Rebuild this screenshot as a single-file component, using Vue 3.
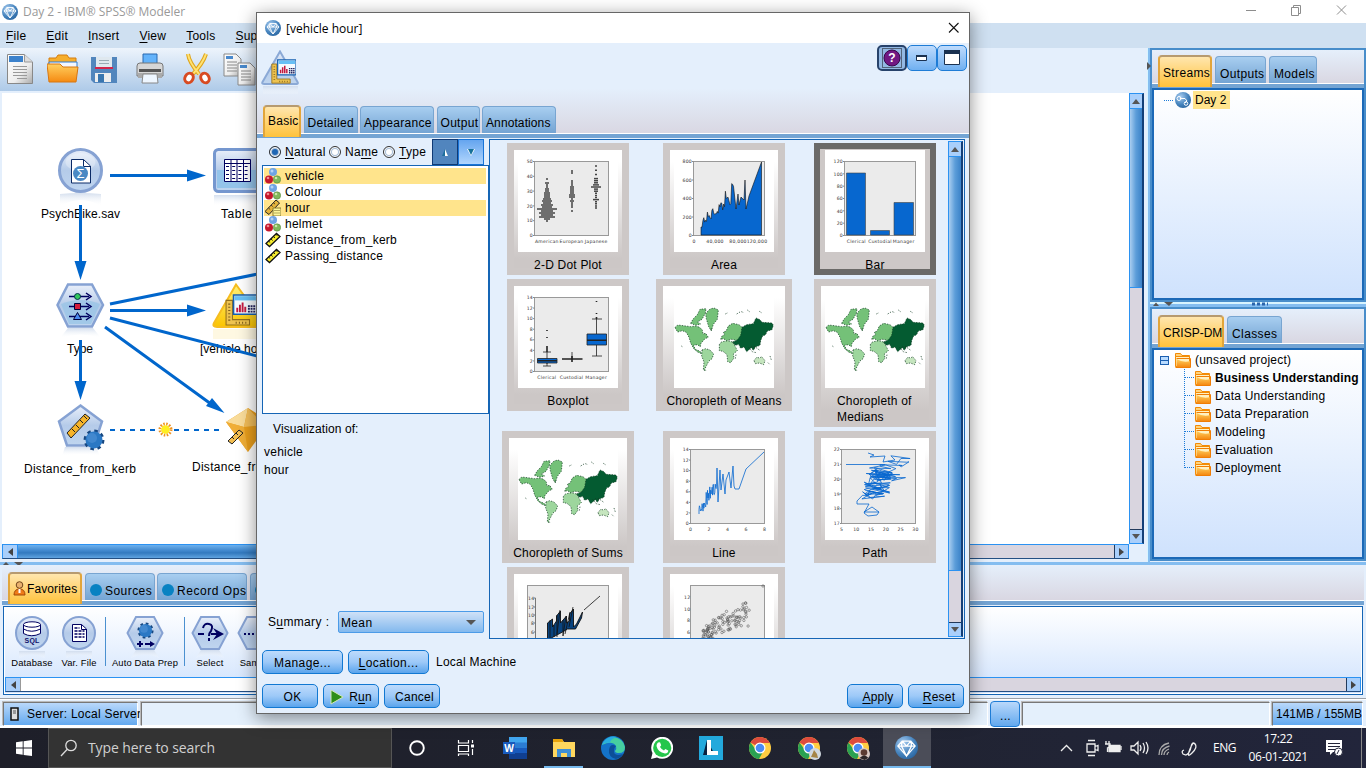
<script setup>
const menus = [['F', 'ile', 34], ['E', 'dit', 34], ['I', 'nsert', 43], ['V', 'iew', 38], ['T', 'ools', 43], ['S', 'up', 40]]
const fields = [
  { name: 'vehicle', kind: 'nominal', on: true },
  { name: 'Colour', kind: 'nominal' },
  { name: 'hour', kind: 'rulernum', on: true },
  { name: 'helmet', kind: 'nominal' },
  { name: 'Distance_from_kerb', kind: 'ruler' },
  { name: 'Passing_distance', kind: 'ruler' }
]
const phases = ['Business Understanding', 'Data Understanding', 'Data Preparation', 'Modeling', 'Evaluation', 'Deployment']

const rnd = (s => () => (s = (s * 16807) % 2147483647) / 2147483647)(42)

const ticks = (list, top = 11.5, bottom = 85.5) =>
  list.map((t, i) => ({ t, y: bottom - ((bottom - top) * i) / (list.length - 1) }))

/* dot plot: rows of stacked dots, widest in the middle of each group */
const dots = [
  [29, 29, [1, 0, 2, 1, 1, 2, 2, 3, 3, 3, 4, 5, 4, 6, 5, 10, 6, 8, 6, 8, 3, 1], 2],
  [54, 21, [1, 1, 0, 0, 0, 1, 1, 1, 2, 2, 2, 2, 3, 3, 1, 2, 1, 1, 1, 0, 1], 2],
  [78, 16, [1, 0, 1, 0, 1, 0, 2, 2, 2, 3, 5, 2, 2, 1, 1, 1, 3, 1, 1, 1, 1], 2.1]
].flatMap(([cx, y0, rows, step]) =>
  rows.map((w, i) => ({ cx, y: y0 + i * step, w })).filter(r => r.w)
)
const areaPts = (() => {
  let p = 'M27 85V77'
  for (let x = 28; x < 60; x += 0.9) p += `L${x.toFixed(1)} ${(78 - (x - 27) * 0.8 - rnd() * (x > 50 ? 20 : 11)).toFixed(1)}`
  return p + 'L62 59L64 44L65 55L67 47L70 50L71 30L72 59L75 46L87.5 12V85Z'
})()
const linePts = (() => {
  let p = 'M25 76'
  for (let x = 25; x < 43; x += 0.45) p += `L${x.toFixed(1)} ${(75 - (x - 25) * 1.5 - rnd() * 15 + 5).toFixed(1)}`
  return p + 'L43 30L44 64L46 32L47 52L49 36L51 56L52 42L55 34L57 50L59 28L60 48L61 51H65L72 31L90 14'
})()
const pathPts = (() => {
  let p = 'M43 15L49 17L45 19L60 18L58 24L70 22'
  for (let i = 0; i < 34; i++) p += `L${(60 + (rnd() - 0.5) * 42 + 5 - i / 6).toFixed(1)} ${(17 + i * 0.7 + rnd() * 8).toFixed(1)}`
  for (let i = 0; i < 90; i++) p += `L${(55 + (rnd() - 0.5) * 27 - i / 18).toFixed(1)} ${(28 + i * 0.3 + rnd() * 9).toFixed(1)}`
  return p + 'L32 63V66L44 66L39 75L43 78L52 77L54 74L47 69L39 74H54'
})()
const scatter = Array.from({ length: 120 }, (_, i) => {
  const q = rnd()
  return { x: 27 + q * q * 46 + rnd() * 7, y: 72 - q * 20 - rnd() * (12 + q * 13) }
}).concat([{ x: 89, y: 12 }, { x: 69, y: 30 }, { x: 62, y: 51 }, { x: 60, y: 42 }])

const cards = [
  { t: '2-D Dot Plot', k: 'dot', x: 16.5, ys: ['0', '10', '20', '30', '40', '50'], xs: ['American', 'European', 'Japanese'] },
  { t: 'Area', k: 'area', x: 19.5, ys: ['0', '200', '400', '600', '800'], xs: ['0', '40,000', '80,000', '120,000'], edge: true },
  { t: 'Bar', k: 'bar', x: 19.5, ys: ['0', '20', '40', '60', '80', '100', '120'], xs: ['Clerical', 'Custodial', 'Manager'], sel: true },
  { t: 'Boxplot', k: 'box', x: 16.5, ys: ['0', '2', '4', '6', '8', '10', '12', '14'], xs: ['Clerical', 'Custodial', 'Manager'] },
  { t: 'Choropleth of Means', k: 'map', wide: 136 },
  { t: 'Choropleth of Medians', k: 'map', tall: true },
  { t: 'Choropleth of Sums', k: 'map', wide: 132 },
  { t: 'Line', k: 'line', x: 16.5, ys: ['0', '2', '4', '6', '8', '10', '12', '14'], xs: ['0', '2', '4', '6', '8'], edge: true },
  { t: 'Path', k: 'path', x: 16.5, ys: ['17', '18', '19', '20', '21', '22'], xs: ['5', '10', '15', '20', '25', '30'], edge: true },
  { t: '', k: 'ribbon', x: 9.5 },
  { t: '', k: 'scatter', x: 16.5 }
]
const xpos = c => c.xs.map((t, i) => {
  const w = 90.5 - c.x
  return { t, x: c.k === 'area' ? [20, 41, 64, 83][i] : c.edge ? c.x + (w * i) / (c.xs.length - 1) : c.x + (w * (i + 0.5)) / c.xs.length }
})
</script>

<template>
  <div class="screen">
    <svg class="defs" width="0" height="0">
      <defs>
        <linearGradient id="nodeFill" x1="0" y1="0" x2="0" y2="1"><stop offset="0" stop-color="#e9effa" /><stop offset=".5" stop-color="#b5cbe9" /><stop offset="1" stop-color="#bfd5ef" /></linearGradient>
        <linearGradient id="refl" x1="0" y1="0" x2="0" y2="1"><stop offset="0" stop-color="#cfdbec" stop-opacity=".9" /><stop offset="1" stop-color="#fff" stop-opacity="0" /></linearGradient>
        <linearGradient id="gold" x1="0" y1="0" x2="0" y2="1"><stop offset="0" stop-color="#fff27a" /><stop offset="1" stop-color="#fbc400" /></linearGradient>
        <linearGradient id="orange" x1="0" y1="0" x2="0" y2="1"><stop offset="0" stop-color="#ffd060" /><stop offset="1" stop-color="#f58a12" /></linearGradient>
        <linearGradient id="paper" x1="0" y1="0" x2="1" y2="1"><stop offset="0" stop-color="#fff" /><stop offset=".6" stop-color="#eee" /><stop offset="1" stop-color="#aaa" /></linearGradient>
        <radialGradient id="ball" cx=".35" cy=".3" r=".8"><stop offset="0" stop-color="#a9cdf0" /><stop offset=".6" stop-color="#4583bd" /><stop offset="1" stop-color="#27629d" /></radialGradient>
      </defs>
      <symbol id="gem" viewBox="0 0 16 16"><circle cx="8" cy="8" r="8" fill="url(#ball)" /><path d="M5 3.5h6L14 7l-6 7-6-7zM2 7h12M5 3.500l-.5 3.500L8 14l3.500-7L11 3.500M5 3.500L8 7l3-3.500" fill="none" stroke="#fff" stroke-width=".9" /></symbol>
      <symbol id="folder" viewBox="0 0 16 16"><path d="M.5 14.500V1.500h5l1.500 2h7.500v2H.5" fill="#ffd37c" stroke="#f38b06" /><path d="M.5 4.500h14v10H.5z" fill="#fff1c0" stroke="#f38b06" /><path d="M1.500 7Q8 11 15.500 9v6H1.500z" fill="url(#orange)" /><path d="M.5 15.500h15v-9h-14" fill="none" stroke="#f07d05" /></symbol>
      <symbol id="nominal" viewBox="0 0 16 16"><circle cx="8" cy="4" r="4" fill="#6fa3e3" /><circle cx="7" cy="3" r="1.500" fill="#b5d3f7" /><circle cx="4" cy="11.500" r="4" fill="#c5172c" /><circle cx="3" cy="10" r="1.300" fill="#ee8b90" /><circle cx="12" cy="11.500" r="3.700" fill="#81b85b" stroke="#4b7c33" stroke-width=".5" /><circle cx="11" cy="10" r="1.300" fill="#cbe8a9" /></symbol>
      <symbol id="ruler" viewBox="0 0 16 16"><path d="M1 11.500L11.500 1.500l3.500 3L4.500 14.500z" fill="#f8ee2d" stroke="#111" stroke-width="1.300" /><path d="M3.500 9l1.700 1.500M6 7l1.700 1.500M8.500 4.500L10 6M11 2.500l1.500 1.200" stroke="#111" stroke-width=".9" /></symbol>
      <symbol id="rulernum" viewBox="0 0 16 16"><path d="M0 11.500L11 0l3.500 3L4 14.500z" fill="#e5b43c" stroke="#222" /><path d="M3.500 8l1.700 1.500M6 5l1.700 1.500M8.500 3L10 4" stroke="#222" stroke-width=".8" /><path d="M8 8h8v8H8z" fill="#fdf69a" stroke="#8a7a30" /><path d="M9.500 10.500h5M9.500 13h5" stroke="#6b5c20" stroke-dasharray="1 1" /></symbol>
      <symbol id="chrome" viewBox="0 0 24 24"><circle cx="12" cy="12" r="11" fill="#ffcd42" /><path d="M12 12L2.500 6.500A11 11 0 0 1 21.500 6.500L22 7H12z" fill="#de4b3d" /><path d="M2.500 6.500A11 11 0 0 0 11 23l5-9-4 2-4-2z" fill="#2aa152" /><circle cx="12" cy="12" r="5.500" fill="#fff" /><circle cx="12" cy="12" r="4.300" fill="#4b8bf5" /></symbol>
      <symbol id="chartpad" viewBox="0 0 30 30"><path d="M1 6h6v18h16v5H1z" fill="#eec350" stroke="#94701b" /><path d="M4 9v16M10 27h11" stroke="#80601a" stroke-width="2" stroke-dasharray="1 2" /><path d="M8 1h22v18H8z" fill="#f5fbff" stroke="#1760b0" stroke-width="1.500" /><path d="M9 2h20v4H9z" fill="#68c0f5" /><path d="M11.500 17v-4M14 17V10M16.500 17V8M19 17v-5" stroke="#c31940" stroke-width="1.800" /><path d="M21.500 11.500h7M21.500 14h7M21.500 16.500h7" stroke="#252560" stroke-width="1.700" stroke-dasharray="1.800 .7" /></symbol>
      <symbol id="gear" viewBox="0 0 22 22"><circle cx="11" cy="11" r="8.700" fill="none" stroke="#174780" stroke-width="3.500" stroke-dasharray="3.400 3.430" /><circle cx="11" cy="11" r="8.500" fill="#2b78c4" /><circle cx="9" cy="9" r="5" fill="#4288cf" /></symbol>
    </svg>

    <header class="titlebar">
      <svg class="app-ic"><use href="#gem" /></svg><span>Day 2 - IBM® SPSS® Modeler</span>
      <svg class="win" width="110" height="23" viewBox="0 0 110 23" fill="none" stroke="#8d8d8d"><path d="M1 10.500h10M46.500 7.500h7v8h-7zM48.500 7.500v-2h7v8h-2M92 5.500l9 9M101 5.500l-9 9" /></svg>
    </header>
    <nav class="menubar"><span v-for="m in menus" :key="m[1]"><u>{{ m[0] }}</u>{{ m[1] }}</span></nav>

    <div class="mid">
      <main class="work">
        <div class="toolbar">
          <svg width="26" height="32" viewBox="0 0 26 32"><path d="M.5 1.500h17L25.500 9v21.500H.5z" fill="url(#paper)" stroke="#888" /><path d="M2 3h14v6H2z" fill="#3c82cc" /><path d="M17.500 1.500V9h8" fill="#ddd" stroke="#999" /><path d="M6 13.500h14M6 16.500h14M6 19.500h14M6 22.500h14M10 25.500h10" stroke="#999" /></svg>
          <svg width="32" height="30" viewBox="0 0 32 30"><path d="M2 4h7l2-3h9l2 3h7v8H2z" fill="#f6ae2c" stroke="#d57d0e" /><path d="M2 8h28v10H2z" fill="#f3f7ff" stroke="#2f7fd4" /><path d="M0 10h13l3 3h15l-2 15H2z" fill="url(#orange)" stroke="#d77611" /></svg>
          <svg width="26" height="28" viewBox="0 0 26 28"><path d="M0 1h26v26H3l-3-3z" fill="#5286bd" /><path d="M5 1h16v12H5z" fill="#dfe8ef" /><path d="M4 11h18v2H4z" fill="#d2254c" /><path d="M8 4.500h10M8 7.500h10" stroke="#99aab5" /><path d="M4 17h16v9H4z" fill="#eee" /><path d="M7 18h6v8H7z" fill="#3976af" /></svg>
          <svg width="28" height="32" viewBox="0 0 28 32"><path d="M7 1h14v12H7z" fill="#63b3fb" stroke="#2868b0" /><path d="M1 13q0-3 3-3h20q3 0 3 3v10H1z" fill="#d6d6d6" stroke="#777" /><path d="M3 16h22v3H3z" fill="#555" /><path d="M2 20h24v5H2z" fill="#aaa" /><path d="M7 21h14l1 9H6z" fill="#eef6ff" stroke="#888" /></svg>
          <svg width="28" height="32" viewBox="0 0 28 32"><path d="M5 1q1 8 11 20M23 1Q20 10 10 21" fill="none" stroke="#dfa51b" stroke-width="4" /><path d="M5 1q1 8 11 20M23 1Q20 10 10 21" fill="none" stroke="#ffe273" stroke-width="2" /><ellipse cx="6" cy="25" rx="4" ry="5" transform="rotate(28 6 25)" fill="#fff" stroke="#d84b22" stroke-width="3" /><ellipse cx="22" cy="25" rx="4" ry="5" transform="rotate(-28 22 25)" fill="#fff" stroke="#d84b22" stroke-width="3" /></svg>
          <svg width="34" height="34" viewBox="0 0 34 34"><g id="pg"><path d="M1 1h12l5 5v17H1z" fill="url(#paper)" stroke="#888" /><path d="M3 3h7v3H3z" fill="#4989cd" /><path d="M4 9h10M4 12h10M4 15h10M4 18h10" stroke="#888" /></g><use href="#pg" x="14" y="9" /></svg>
        </div>
        <div class="canvas-row">
          <svg class="canvas" width="1127" height="451" viewBox="2 93 1127 451" font-family="Liberation Sans, Arial, sans-serif" font-size="12">
            <path d="M60 194q20-2 41 0v12q-20-12-41 0z" fill="url(#refl)" />
            <circle cx="80.500" cy="170.500" r="21" fill="url(#nodeFill)" stroke="#86a2d3" stroke-width="3" />
            <ellipse cx="80.500" cy="162" rx="15" ry="9" fill="#fff" opacity=".3" />
            <path d="M71.500 159.500h12l7 6.500v17h-19z" fill="#fff" stroke="#0b2b66" /><path d="M83.500 159.500v7h7" fill="none" stroke="#0b2b66" />
            <circle cx="80.500" cy="173.500" r="7.500" fill="#4a89c4" /><text x="80.500" y="178" text-anchor="middle" fill="#fff" font-size="13">Σ</text>
            <text x="41" y="218" textLength="79">PsychBike.sav</text>
            <path d="M214 195h50v11h-50z" fill="url(#refl)" />
            <rect x="214.500" y="149.500" width="50" height="42" rx="4" fill="url(#nodeFill)" stroke="#7597cf" stroke-width="3" /><path d="M217 170h40v18h-40z" fill="#94c4ea" />
            <path d="M224.500 159.500h26v22h-26zM225 163.500h25M231 160v21M237 160v21M243.500 160v21" fill="#fff" stroke="#00005e" /><path d="M226 166.500h25M226 170.500h25M226 174.500h25M226 178.500h25" stroke="#00005e" stroke-dasharray="3 3.200" />
            <text x="221" y="218" textLength="31">Table</text>
            <path d="M68 328h25l8 10q-20-7-41 0z" fill="url(#refl)" />
            <path d="M68 284.500h24l11 20.500-11 21.500H68L57.500 305z" fill="url(#nodeFill)" stroke="#86a2d3" stroke-width="2.500" /><path d="M61 304q20-8 39 0l-9 20H69z" fill="#96c3e5" opacity=".7" />
            <path d="M69 296.500h20M69 306.500h20M69 316.500h20" stroke="#000060" stroke-width="1.500" /><path d="M86 293l5 3.500-5 3.500M86 303l5 3.500-5 3.500M86 313l5 3.500-5 3.500" fill="none" stroke="#000060" stroke-width="1.500" />
            <circle cx="77.500" cy="296.500" r="3" fill="#32c85c" stroke="#00304a" /><path d="M74.500 303.500h6v6h-6z" fill="#d41c3b" stroke="#00003a" /><path d="M77.500 312.500l4 7h-8z" fill="#4a8af0" stroke="#00003a" />
            <text x="67" y="353" textLength="26">Type</text>
            <path d="M213 329h47v10h-47z" fill="#fdf3cf" opacity=".6" />
            <path d="M236 284.500L214 323q-2 4 3 4h50z" fill="url(#gold)" stroke="#f6bd20" stroke-width="2" />
            <use href="#chartpad" x="225" y="294" width="32" height="32" />
            <text x="200" y="353">[vehicle hour]</text>
            <path d="M65 447h31l4 9q-20-4-38 0z" fill="url(#refl)" />
            <path d="M80.500 405.500l21.500 16-8 24H67l-8-24z" fill="url(#nodeFill)" stroke="#86a2d3" stroke-width="2.500" />
            <path d="M67 433l18-19 5 4-19 20z" fill="#f7b429" stroke="#222" /><path d="M72 429l3 3M76 425l3 3M80 420l3 3M84 416l3 3" stroke="#222" />
            <use href="#gear" x="83" y="429" width="22" height="22" />
            <text x="24" y="473" textLength="112">Distance_from_kerb</text>
            <path d="M248 408l22 14-22 30-22-30z" fill="#e99e1c" /><path d="M248 408l-22 14 18 5z" fill="#f9dc9a" /><path d="M248 408l-4 19 20-2z" fill="#f2bd59" /><path d="M244 427l4 25-22-30z" fill="#f0ae37" />
            <path d="M228 441l11-11 4 3-11 11z" fill="#f3be50" stroke="#222" /><path d="M232 437l2 2M236 433l2 2" stroke="#222" />
            <text x="192" y="471" textLength="112">Distance_from_kerb</text>
            <g stroke="#0066cc" stroke-width="3" fill="none">
              <path d="M110 175.500h80M80.500 205v60M110 304l170-34.500M110 310.500h80M110 318l170 44M105 327l106 77M80.500 340v45" />
              <path d="M110 430h45M174 430h46" stroke-width="2" stroke-dasharray="5 5" />
            </g>
            <path d="M187 169.500l19 6-19 6zM187 304.500l19 6-19 6zM74.500 261l6 19 6-19zM74.500 381l6 19 6-19zM212 398l12.500 15-18.500-7z" fill="#0066cc" />
            <circle cx="165.500" cy="429.500" r="5.500" fill="none" stroke="#ef9420" stroke-width="3" stroke-dasharray="1.500 1.380" /><circle cx="165.500" cy="429.500" r="4.300" fill="#ffef22" />
          </svg>
          <div class="vs canvas-vs"><i class="btn up"></i><i class="thumb"></i><i class="btn down"></i></div>
        </div>
        <div class="hs"><i class="btn left"></i><i class="thumb"></i><i class="btn right"></i></div>
      </main>
      <div class="split"></div>
      <aside class="side">
        <section class="panel top">
          <div class="tabs"><b class="tab on">Streams</b><b class="tab">Outputs</b><b class="tab">Models</b></div>
          <div class="pane"><div class="tree-row"><i class="dash"></i>
            <svg class="i16" viewBox="0 0 16 16"><circle cx="8" cy="8" r="8" fill="url(#ball)" /><path d="M5 6.500h5l2 2.500-2 2" fill="none" stroke="#fff" /><circle cx="4" cy="6.500" r="2" fill="none" stroke="#fff" /><circle cx="11" cy="11.500" r="1.800" fill="none" stroke="#fff" /></svg>
            <span class="hl">Day 2</span></div></div>
        </section>
        <div class="hsplit"><svg width="120" height="4" viewBox="0 0 120 4"><path d="M3 4l3-3.500L9 4M14 0h9l-4 4z" fill="#555" /><path d="M102 2h16" stroke="#2b65ac" stroke-width="3" stroke-dasharray="3 2" /></svg></div>
        <section class="panel bottom">
          <div class="tabs"><b class="tab on crisp">CRISP-DM</b><b class="tab">Classes</b></div>
          <div class="pane">
            <div class="tree-row"><i class="minus"></i><svg class="i16"><use href="#folder" /></svg><span>(unsaved project)</span></div>
            <div class="kids"><div v-for="(p, i) in phases" :key="p" class="tree-row kid" :class="{ bold: i === 0 }"><i class="dot"></i><svg class="i16"><use href="#folder" /></svg><span>{{ p }}</span></div></div>
          </div>
        </section>
      </aside>
    </div>

    <section class="palette">
      <div class="seam"><svg width="30" height="4" viewBox="0 0 30 4"><path d="M2 4l4-4 4 4M14 0h9l-4 4z" fill="#555" /></svg></div>
      <div class="tabs">
        <b class="tab on fav"><svg width="13" height="15" viewBox="0 0 13 15"><circle cx="6.500" cy="4" r="3.300" fill="#e9b16e" stroke="#70451c" /><path d="M1 14q0-6 5.500-6T12 14z" fill="#ef7b18" stroke="#a44a08" /><path d="M6.500 8v4" stroke="#fff" stroke-width="2" /></svg>Favorites</b>
        <b class="tab"><i class="disc"></i>Sources</b><b class="tab rec"><i class="disc"></i>Record Ops</b><b class="tab"><i class="disc"></i>Field Ops</b>
      </div>
      <div class="shelf">
        <div class="items">
          <div class="item w1"><svg width="38" height="44" viewBox="0 0 38 44"><path d="M6 36h26v8q-13-9-26 0z" fill="url(#refl)" /><circle cx="19" cy="18" r="16" fill="url(#nodeFill)" stroke="#86a2d3" stroke-width="2" /><path d="M10.500 9.500v9q8 4.500 17 0v-9" fill="#fff" stroke="#000060" /><ellipse cx="19" cy="9.500" rx="8.500" ry="2.700" fill="#fff" stroke="#000060" /><path d="M10.500 14q8 4.500 17 0" fill="none" stroke="#000060" /><text x="19" y="28" text-anchor="middle" font-size="7" font-weight="700" fill="#10106a" font-family="Liberation Sans">SQL</text></svg><span>Database</span></div>
          <div class="item w2"><svg width="38" height="44" viewBox="0 0 38 44"><path d="M6 36h26v8q-13-9-26 0z" fill="url(#refl)" /><circle cx="19" cy="18" r="16" fill="url(#nodeFill)" stroke="#86a2d3" stroke-width="2" /><path d="M12.500 9.500h9l5 4.500v12.500h-14z" fill="#fff" stroke="#000060" /><path d="M21.500 9.500v5h5" fill="none" stroke="#000060" /><path d="M14.500 13h5M14.500 16h10M14.500 19h10M14.500 22h10" stroke="#000060" stroke-width="1.500" stroke-dasharray="3 1" /></svg><span>Var. File</span></div>
          <hr /><div class="item w3"><svg width="38" height="44" viewBox="0 0 38 44"><path d="M10 35h18l6 9q-15-9-30 0z" fill="url(#refl)" /><path d="M10 2h18l8.500 16L28 34H10L1.500 18z" fill="url(#nodeFill)" stroke="#86a2d3" stroke-width="2" /><use href="#gear" x="11" y="7" width="17" height="17" /><path d="M11 29h6M14 26v6M19 29h7" stroke="#000060" stroke-width="2" /><path d="M24 26l5 3-5 3z" fill="#000060" /></svg><span>Auto Data Prep</span></div>
          <hr /><div class="item w4"><svg width="38" height="44" viewBox="0 0 38 44"><path d="M10 35h18l6 9q-15-9-30 0z" fill="url(#refl)" /><path d="M10 2h18l8.500 16L28 34H10L1.500 18z" fill="url(#nodeFill)" stroke="#86a2d3" stroke-width="2" /><path d="M7 19h6M20 19h8" stroke="#000060" stroke-width="2" /><path d="M12 13q1-5 6-4t2 7q-2 2-2 5M18 23v3" fill="none" stroke="#000060" stroke-width="2" /><path d="M22 13l11 6-11 6 4-6z" fill="#000060" /></svg><span>Select</span></div>
          <div class="item w5"><svg width="38" height="44" viewBox="0 0 38 44"><path d="M10 2h18l8.500 16L28 34H10L1.500 18z" fill="url(#nodeFill)" stroke="#86a2d3" stroke-width="2" /><path d="M7 19h22" stroke="#000060" stroke-width="2" stroke-dasharray="2 2" /></svg><span>Sample</span></div>
        </div>
        <div class="hs shelf-hs"><i class="btn left"></i><i class="gap"></i><i class="btn right"></i></div>
      </div>
    </section>

    <footer class="status">
      <div class="cell server"><svg width="9" height="14" viewBox="0 0 9 14"><path d="M1 1h7v12H1z" fill="#ddd" stroke="#111" stroke-width="1.500" /><path d="M3 4h3M3 6h3" stroke="#555" /></svg>Server: Local Server</div>
      <div class="cell long"></div><div class="more">...</div><div class="cell mid2"></div><div class="cell mem">141MB / 155MB</div>
    </footer>

    <div class="taskbar">
      <div class="start"><svg width="16" height="16" viewBox="0 0 16 16" fill="#fff"><path d="M0 2.300L6.700 1.300V7.600H0zM7.600 1.200L16 0V7.600H7.600zM0 8.500H6.700V14.700L0 13.800zM7.600 8.500H16V16L7.600 14.900z" /></svg></div>
      <div class="search"><svg width="18" height="18" viewBox="0 0 18 18" fill="none" stroke="#ddd" stroke-width="1.300"><circle cx="11" cy="6.500" r="5.200" /><path d="M7 10.500L1 17" /></svg><span>Type here to search</span></div>
      <div class="apps">
        <div class="app"><svg width="18" height="18" viewBox="0 0 18 18"><circle cx="9" cy="9" r="6.800" fill="none" stroke="#fff" stroke-width="1.900" /></svg></div>
        <div class="app"><svg width="18" height="18" viewBox="0 0 18 18" fill="none" stroke="#fff" stroke-width="1.200"><path d="M1.500 1v3h10V1M1.500 6.500h10v6h-10zM1.500 17v-2h10v2M15.500 1v3M15.500 10v6" /><path d="M14 5.500h3v3h-3z" fill="#fff" stroke="none" /></svg></div>
        <div class="app"><svg width="24" height="22" viewBox="0 0 24 22"><path d="M6 0h18v6H6z" fill="#41a5ee" /><path d="M6 5.500h18V11H6z" fill="#2b7cd3" /><path d="M6 11h18v5.500H6z" fill="#185abd" /><path d="M6 16h18v6H6z" fill="#103f91" /><path d="M0 5h12v12H0z" fill="#185abd" /><text x="6" y="14.500" text-anchor="middle" font-size="10" font-weight="700" fill="#fff" font-family="Open Sans, sans-serif">W</text></svg></div>
        <div class="app running"><svg width="22" height="20" viewBox="0 0 22 20"><path d="M0 1h9l2 3h11v15H0z" fill="#ffd75e" /><path d="M0 1h9l1.500 3H0z" fill="#e8a40c" /><path d="M4 19v-8h14v8h-4v-4H8v4z" fill="#3f8fd4" /></svg></div>
        <div class="app"><svg width="24" height="24" viewBox="0 0 24 24"><circle cx="12" cy="12" r="12" fill="#1473c9" /><path d="M1 9a12 12 0 0 1 23 2q0 6-6 6-4 0-4-2 2-2 1-5-4-6-14-1z" fill="#46cfa0" /><path d="M1 9a12 12 0 0 1 15-8Q9 3 9 7 4 6 1 9z" fill="#29aee0" /><path d="M15 10q-6-3-7 4-1 7 7 9 5-1 7-5-10 3-9-4 0-2 2-4z" fill="#0c4f98" /></svg></div>
        <div class="app"><svg width="22" height="22" viewBox="0 0 22 22"><path d="M0 22l1.500-6A11 11 0 1 1 6 20.500z" fill="#fff" /><circle cx="11.200" cy="10.900" r="9.100" fill="#25c64b" /><path d="M7 5.500l2-.2 1.200 3L9 10q1.500 2.500 4 3.500l1.300-1.600 3 1.500q-.2 3-3.300 3Q7 15.500 5.500 9 5.500 6.500 7 5.500z" fill="#fff" /></svg></div>
        <div class="app"><svg width="24" height="24" viewBox="0 0 24 24"><path d="M0 0h24v24H0z" fill="#23a9dc" /><path d="M8 4L4 19h12z" fill="#08213f" /><path d="M8 4h4v11h7v4H8z" fill="#fff" /></svg></div>
        <div class="app"><svg width="24" height="24"><use href="#chrome" /></svg></div>
        <div class="app"><svg width="24" height="24" viewBox="0 0 24 24"><use href="#chrome" /><circle cx="18" cy="18" r="6" fill="#d0d8e0" /><path d="M14 21q2-4 3-7l3 4 1 4z" fill="#a48446" /></svg></div>
        <div class="app"><svg width="24" height="24" viewBox="0 0 24 24"><use href="#chrome" /><circle cx="18" cy="18" r="6" fill="#d9c9c4" /><circle cx="18" cy="16.500" r="3.300" fill="#5b3b32" /><path d="M13.500 22q5-5 9 0l-4 2z" fill="#2b2527" /></svg></div>
        <div class="app active"><svg width="23" height="23"><use href="#gem" /></svg></div>
      </div>
      <svg class="tray" width="144" height="24" viewBox="0 0 144 24" fill="none" stroke="#eee" stroke-width="1.300"><path d="M1 15l5.500-5.500L12 15" /><path d="M27 8h8v8h-8zM35 10.500l3-1v5l-3-1M28 4.500h7M28 19.500h7" /><path d="M49 9.500h11v6H49z" fill="#eee" /><path d="M61 10v4M46 5v3M49 5v3M45 8h5v2q-1 2-2.500 2v4" /><path d="M71 10h3l4-4v12l-4-4h-3zM80 9q2 3 0 6M83 7q3 5 0 10M86 6q4 6 0 12" /><path d="M99 19q0-10 10-12M101.500 19q0-7 8-9M104 19q0-4 5-6M107 19q0-2 2-3" stroke="#aaa" /><path d="M124 14q-3 1-1 4l3 1q4-2 5-8t4-3-3 9-2-4 6-3" /></svg>
      <span class="eng">ENG</span>
      <div class="clock"><span>17:22</span><span>06-01-2021</span></div>
      <svg class="note" width="18" height="18" viewBox="0 0 18 18"><path d="M1 1h16v12H8l-3 3v-3H1z" fill="#fff" /><path d="M3 4.500h12M3 7.500h12M3 10.500h7" stroke="#23253a" /><circle cx="13.500" cy="13" r="4" fill="#fff" stroke="#23253a" /><path d="M12 15l2-4" stroke="#23253a" /></svg>
      <i class="peek"></i>
    </div>

    <div class="dialog">
      <div class="dtitle"><svg class="app-ic"><use href="#gem" /></svg><span>[vehicle hour]</span><svg class="x" width="12" height="12" viewBox="0 0 12 12"><path d="M1 1l9.500 9.500M10.500 1L1 10.500" stroke="#111" stroke-width="1.100" /></svg></div>
      <div class="dhead">
        <div class="dtop">
          <svg width="38" height="44" viewBox="0 0 38 44"><path d="M2 36h35v9H2z" fill="url(#refl)" /><path d="M19 1.500L1.500 32q-1 2 2 2h32q2 0 1-2z" fill="url(#nodeFill)" stroke="#8ba9d6" stroke-width="2" /><use href="#chartpad" x="10" y="9" width="25" height="25" /></svg>
          <div class="tools">
            <b class="tbtn dark"><svg width="20" height="20" viewBox="0 0 20 20"><rect x=".5" y=".5" width="19" height="19" fill="none" stroke="#111" stroke-dasharray="1 1" /><circle cx="10" cy="10" r="8" fill="#711782" stroke="#37064a" /><text x="10" y="14" text-anchor="middle" fill="#fff" font-size="12" font-weight="700" font-family="Liberation Sans">?</text></svg></b>
            <b class="tbtn"><svg width="12" height="8" viewBox="0 0 12 8"><path d="M.5 1.500h10v5H.5z" fill="#fff" stroke="#1a3150" /><path d="M0 2h11" stroke="#1a3150" stroke-width="2" /></svg></b>
            <b class="tbtn"><svg width="18" height="18" viewBox="0 0 18 18"><path d="M1.500 1.500h15v14h-15z" fill="#fff" stroke="#1a3150" /><path d="M1 3h16" stroke="#1a3150" stroke-width="4" /></svg></b>
          </div>
        </div>
        <div class="tabs"><b class="tab on">Basic</b><b class="tab">Detailed</b><b class="tab">Appearance</b><b class="tab">Output</b><b class="tab">Annotations</b></div>
      </div>
      <div class="dbody">
        <div class="dleft">
          <div class="sort">
            <label><i class="radio sel"></i><span><u>N</u>atural</span></label><label><i class="radio"></i><span>Na<u>m</u>e</span></label><label><i class="radio"></i><span><u>T</u>ype</span></label>
            <b class="sb pressed"><svg width="10" height="9" viewBox="0 0 10 9"><path d="M5 1l3 7H2z" fill="#1e6f9d" /><path d="M5 1l3 7H5" fill="#fff" /></svg></b><b class="sb"><svg width="10" height="9" viewBox="0 0 10 9"><path d="M1 1h8L5 8z" fill="#fff" /><path d="M2 1h6L5 7z" fill="#167199" /></svg></b>
          </div>
          <div class="list"><div v-for="f in fields" :key="f.name" class="frow" :class="{ on: f.on }"><svg class="i16"><use :href="'#' + f.kind" /></svg><span>{{ f.name }}</span></div></div>
          <p class="vis">Visualization of:</p><p class="v1">vehicle</p><p class="v1">hour</p>
          <div class="summary"><span>S<u>u</u>mmary<em>:</em></span><div class="select">Mean<i></i></div></div>
        </div>
        <div class="gallery">
          <div class="cards">
            <div v-for="c in cards" :key="c.k + c.t" class="card" :class="{ sel: c.sel, tall: c.tall, w136: c.wide === 136, w132: c.wide === 132 }">
              <svg class="chart" width="100" height="102" viewBox="0 0 100 102" font-family="DejaVu Sans, sans-serif" font-size="4.600" fill="#333">
                <rect width="100" height="102" fill="#fff" />
                <template v-if="c.k !== 'map'">
                  <rect :x="c.x" y="11.500" :width="90.5 - c.x" :height="c.x === 9.5 ? 80 : 74" fill="#ebebeb" stroke="#999" />
                  <g v-if="c.ys"><text v-for="t in ticks(c.ys)" :key="t.t" :x="c.x - 1.5" :y="t.y + 1.7" text-anchor="end">{{ t.t }}</text></g>
                  <path v-if="c.ys" :d="ticks(c.ys).map(t => `M${c.x - 1.5} ${t.y}h1.500`).join('')" stroke="#888" />
                  <g v-if="c.xs"><text v-for="t in xpos(c)" :key="t.t" :x="t.x" y="92.500" text-anchor="middle">{{ t.t }}</text></g>
                </template>
                <g v-if="c.k === 'dot'"><path v-for="(d, i) in dots" :key="i" :d="`M${d.cx - d.w} ${d.y}h${d.w * 2}`" stroke="#444" stroke-width="1.500" /></g>
                <path v-if="c.k === 'area'" :d="areaPts" fill="#0767cf" stroke="#111" stroke-width=".6" />
                <g v-if="c.k === 'bar'" fill="#0767cf" stroke="#444" stroke-width=".6"><path d="M21.500 85V23h19v62zM45.500 85v-4.500h19V85zM69 85V52.500h19.500V85z" /></g>
                <g v-if="c.k === 'box'" stroke="#222" stroke-width=".8"><path d="M29 66V78M25 66h8M25 80h8M29 75v5M54 66v7M78.500 33v15M74 33h10M78.500 59v11M74 70h10" /><path d="M19.500 72.500h19.500v4.500h-19.500zM69 48h19.500v11H69z" fill="#0767cf" /><path d="M19.500 74.800h19.500M44 73h20.500M69 54.200h19.500" stroke-width="1.500" /><path d="M29 60v6M29 51v1M29 44v1M54 70v6M78.500 31v2M78.500 27v1M78.500 15v1" stroke-width="1.600" /></g>
                <path v-if="c.k === 'line'" :d="linePts" fill="none" stroke="#0767cf" stroke-width=".8" />
                <path v-if="c.k === 'path'" :d="'M21 26.500H60' + pathPts" fill="none" stroke="#0767cf" stroke-width=".8" />
                <g v-if="c.k === 'ribbon'"><text x="10" y="26">14</text><text x="10" y="35">12</text><text x="10" y="43">10</text><text x="13" y="51">8</text><text x="13" y="60">6</text><path d="M17.500 24v50M16 24h1.500M16 33h1.500M16 41h1.500M16 49h1.500M16 58h1.500" stroke="#777" /><path d="M29.500 66V49l5-4v8l4-6v-5l4-5v12l6-7v7l3-2v-7l4-5v18l3-3 6-12-1 6-6 11h-8l-5 3z" fill="#08437f" stroke="#111" stroke-width=".9" /><path d="M32 46v18M36 51v12M39 41v22M42 36l-3 24M45 46v16M48 42l-3 20M52 38l-5 22M55 33l-4 20M66 36L82 22" stroke="#111" stroke-width=".8" fill="none" /></g>
                <g v-if="c.k === 'scatter'"><text x="10" y="25">12</text><text x="10" y="37">10</text><text x="13" y="48">8</text><text x="13" y="60">6</text><circle v-for="(p, i) in scatter" :key="i" :cx="p.x" :cy="p.y" r="1.200" fill="none" stroke="#555" stroke-width=".55" /></g>
                <g v-if="c.k === 'map'" transform="scale(.3333)" stroke="#123c22" stroke-width="2.200" stroke-dasharray="4 4">
                  <path d="M3 125l8-8 24 3 15 2 15-2 12 4 8 8 2 12 8-2 8 12-10 4-12 14-2 10-9-6-12 2 6 12 14 6 8 8-14-5-12-10-10-18-5-17-8-15-12-5-14 4zM50 112l8-14 12-12 8-16 18-2-2 14-10 18-14 8 10 6-14 4zM100 77l8-8 12-3 13 6-3 28-12 15-6 20-8-13-7-24-2-14z" fill="#74c178" />
                  <path d="M84 192l11-4 13 4 11 12-5 14-10 8-6 12-6 12 4 4-8-2 2-24-7-18zM136 176l6-8 18-4 16 4 8 14 6 12-12 10 2 12-10 14-9-3-2-21-12-10-11-2z" fill="#9dd69d" />
                  <path d="M140 160l4-10 8-4-4-8 8-2 7-16 13-8 19 4 16 14-6 22-12 12-20-4-16 4-8-6z" fill="#74c178" />
                  <path d="M176 168l14-6 10-14 4-24 14-8 20-3 8-17 12 5 6 8 30 2 4 7-4 13-14 4-6 12-8 2-6 15-2 14-14 5-6 10-6-8-14 12-8-14-10 4-6-12-10 3z" fill="#045b31" />
                  <path d="M240 224l8-10 9 2 6-4 10 12-4 12-13-5-12 2z" fill="#c5e5be" />
                  <path d="M224 184l12 14 12 2M232 181l12 10M240 180l16 12M154 84l8-4M188 84l10-6M220 72l8 6M256 76l8 5M288 210l4 12M282 230l6 6M186 206l-2 12M202 77l8 3M22 180l3 2M110 130l6-1M240 182l3 5" fill="none" />
                </g>
              </svg>
              <span class="cap">{{ c.t }}</span>
            </div>
          </div>
          <div class="vs gal-vs"><i class="btn up"></i><i class="thumb"></i><i class="btn down"></i></div>
        </div>
      </div>
      <div class="drow"><b class="bt w81">Mana<u>g</u>e...</b><b class="bt w81"><u>L</u>ocation...</b><span>Local Machine</span></div>
      <div class="drow last"><b class="bt ok">OK</b><b class="bt run"><svg width="14" height="16" viewBox="0 0 14 16"><path d="M1 1l12 7-12 7z" fill="#2f8f18" stroke="#d4e8b8" /></svg><span>R<u>u</u>n</span></b><b class="bt">Cancel</b><b class="bt push"><span><u>A</u>pply</span></b><b class="bt ind"><span><u>R</u>eset</span></b></div>
    </div>
  </div>
</template>

<style>
html, body { margin: 0; overflow: hidden; }
</style>
<style scoped>
* { box-sizing: border-box; }
.screen { position: relative; width: 1366px; height: 768px; overflow: hidden; display: flex; flex-direction: column; background: #e4effc; color: #000; font: 12px/16px "Liberation Sans", Arial, sans-serif; letter-spacing: .24px; white-space: nowrap; }
.defs { position: absolute; }
svg { display: block; flex: none; }
b { font-weight: 400; }
i, em { font-style: normal; flex: none; }
p { margin: 0; }
u { text-underline-offset: 2px; text-decoration-thickness: 1px; }
.i16, .app-ic { width: 16px; height: 16px; }

.titlebar { height: 23px; flex: none; background: #fff; display: flex; align-items: center; padding-left: 2px; color: #999; font: 12px "Open Sans", sans-serif; letter-spacing: -.05px; }
.titlebar span { margin-left: 5px; }
.win { margin-left: auto; margin-right: 11px; }
.menubar { height: 25px; flex: none; background: #cfe0f1; display: flex; padding: 5px 0 0 6px; }
.menubar span { margin-right: 20px; }
.mid { height: 514px; flex: none; display: flex; }
.work { width: 1147px; padding-left: 2px; display: flex; flex-direction: column; }
.toolbar { width: 700px; height: 43px; margin: 0 0 2px -2px; padding: 5px 0 0 7px; display: flex; gap: 15px; background: linear-gradient(#edf4fc, #aecae8); }
.toolbar svg:nth-child(2) { margin: 1px 0 0 -1px; }
.toolbar svg:nth-child(3) { margin: 3px 0 0 -3px; }
.toolbar svg:nth-child(4) { margin-left: 4px; }
.toolbar svg:nth-child(5) { margin-left: 4px; }
.toolbar svg:nth-child(6) { margin-left: -3px; }
.canvas-row { display: flex; height: 451px; flex: none; }
.canvas { background: #fff; letter-spacing: 0; }
.vs, .hs { display: flex; background: #d9d5df; border: 1px solid #2b92f2; }
.vs { width: 15px; flex-direction: column; border-right-color: #123f78; border-right-width: 2px; }
.vs .btn { height: 14px; }
.btn { display: flex; align-items: center; justify-content: center; background: #a9cffb; flex: none; }
.btn::after { content: ""; border: 4px solid transparent; }
.up::after { border-bottom: 5px solid #555; border-top: 0; }
.down::after { border-top: 5px solid #555; border-bottom: 0; }
.left::after { border-right: 5px solid #444; border-left: 0; }
.right::after { border-left: 5px solid #444; border-right: 0; }
.vs .thumb { background: linear-gradient(90deg, #a9cdf0, #5c9dd9 50%, #3b82c8); border-top: 1px solid #2b92f2; border-bottom: 1px solid #2b92f2; }
.vs .down { margin-top: auto; border-top: 1px solid #223a5c; }
.canvas-vs .thumb { height: 180px; }
.hs { height: 15px; flex: none; width: 1127px; border-bottom: 1px solid #234f83; }
.hs .btn { width: 14px; }
.hs .thumb { width: 900px; background: linear-gradient(#6db1ee, #3f86cc 45%, #3279bf 60%, #5fa3e0); border-left: 1px solid #2b92f2; }
.hs .right { margin-left: auto; border-left: 1px solid #223a5c; }
.split { width: 3px; background: linear-gradient(90deg, #d8f4ff 50%, #84bdf0 50%); position: relative; }
.split::after { content: ""; position: absolute; top: 14px; left: 0; border: 4px solid transparent; border-left-color: #555; border-right: 0; }
.side { width: 216px; display: flex; flex-direction: column; }
.panel { border: 2px solid #488dca; display: flex; flex-direction: column; }
.panel.top { height: 254px; }
.panel.bottom { height: 254px; }
.hsplit { height: 5px; background: linear-gradient(#d8f4ff 40%, #84bdf0 40%); }
.tabs { height: 35px; flex: none; position: relative; display: flex; align-items: flex-end; gap: 3px; background: linear-gradient(#e5effb, #d9d7e2); border-bottom: 1px solid #fff; padding-left: 6px; }
.tabs::after { content: ""; position: absolute; left: 0; right: 0; top: 100%; margin-top: 1px; height: 4px; background: #74a4d3; }
.tab { height: 27px; padding: 9px 4px 0; border: 1px solid #78a5d1; border-bottom: 0; border-radius: 4px 4px 0 0; background: linear-gradient(#a8cef0, #74a4d3); display: flex; }
.tab.on { height: 32px; margin-bottom: -4px; padding: 8px 2px 0 4px; background: linear-gradient(#ffe6ae, #ffc23b); border: 2px solid #d5a85a; border-bottom: 0; position: relative; z-index: 1; border-color: #b69a70 #e2a53a; }
.pane { flex: 1; margin-top: 4px; border: 2px solid #1c69b7; background: linear-gradient(#fff, #cfe2fd); padding-top: 1px; }
.panel.top .tabs { height: 34px; }
.panel.top .tab.on { width: 54px; padding-left: 3px; }
.panel.top .tab { padding-left: 4px; letter-spacing: .35px; }
.panel.top .tab:nth-child(2) { width: 51px; }
.panel.top .tab:nth-child(3) { width: 48px; }
.panel.bottom .tab.on { width: 66px; padding-left: 3px; letter-spacing: 0; }
.panel.bottom .tab:nth-child(2) { width: 55px; letter-spacing: .4px; }
.tree-row { height: 18px; display: flex; align-items: center; padding-left: 21px; position: relative; letter-spacing: .2px; }
.tree-row span { margin-left: 4px; }
.dash { position: absolute; left: 10px; top: 9px; width: 9px; border-top: 1px dotted #1d7bd8; }
.tree-row .hl { background: #ffe48c; padding: 1px 4px 1px 2px; margin-left: 2px; letter-spacing: 0; }
.minus { position: absolute; left: 6px; top: 5px; width: 9px; height: 9px; border: 1px solid #1b5fb0; background: linear-gradient(#0000 3px, #1b5fb0 3px 4px, #0000 4px), #b8dbff; }
.kids { position: relative; }
.kids::before { content: ""; position: absolute; left: 30px; top: 0; height: 99px; border-left: 1px dotted #1d7bd8; }
.kid { padding-left: 41px; }
.kid.bold { font-weight: 700; letter-spacing: .1px; }
.dot { position: absolute; left: 31px; top: 8px; width: 9px; border-top: 1px dotted #1d7bd8; }

.palette { height: 136px; flex: none; display: flex; flex-direction: column; }
.seam { height: 3px; background: #84bdf0; }
.palette .tabs { height: 36px; margin: 0 2px; padding-left: 6px; }
.palette .tab { font-size: 12px; padding: 9px 5px 0 4px; align-items: flex-start; letter-spacing: .45px; }
.palette .tab.on { width: 74px; padding: 7px 0 0 3px; letter-spacing: .1px; }
.palette .tab.on svg { margin-right: 1px; }
.palette .tab:nth-child(2) { width: 70px; margin-right: -1px; }
.palette .tab.rec { width: 90px; letter-spacing: .55px; }
.disc { width: 12px; height: 12px; border-radius: 6px; background: #0882c2; margin: 1px 3px 0 0; }
.shelf { flex: 1; margin: 5px 3px 3px; border: 1px solid #1565b5; box-shadow: inset 0 0 0 1px #fff; background: linear-gradient(#fff, #cfe2fd); display: flex; flex-direction: column; padding: 8px 1px 2px; }
.items { display: flex; flex: 1; }
.items hr { margin: 2px 0; width: 1px; height: 49px; border: 0; background: #4a90d0; }
.item { display: flex; flex-direction: column; align-items: center; font-size: 9.400px; line-height: 12px; letter-spacing: .15px; }
.item span { margin-top: -2px; }
.w1 { width: 54px; } .w2 { width: 40px; margin-right: 6px; } .w3 { width: 78px; } .w4 { width: 50px; } .w5 { width: 42px; }
.shelf-hs { width: auto; border-left-width: 1px; }
.shelf-hs .gap { width: 948px; background: #fff; border-left: 1px solid #999; }

.status { height: 30px; flex: none; display: flex; align-items: center; gap: 2px; padding: 0 3px; border-top: 1px solid #9aa0a8; background: #e4effc; box-shadow: inset 0 1px #fff, inset 0 -2px #fff; margin-top: 0; }
.cell { height: 24px; border: 1px solid #777; border-right-color: #fff; border-bottom-color: #fff; box-shadow: -1px -1px #bbb; background: #e4f0fc; }
.server { width: 135px; display: flex; align-items: center; padding-left: 6px; gap: 8px; background: linear-gradient(#b9d8fb, #63a9ef); }
.long { width: 849px; margin-left: 1px; }
.more { width: 30px; height: 26px; border: 1px solid #1e7cd6; border-radius: 4px; background: linear-gradient(#b9d8fb, #63a9ef); text-align: center; padding-top: 6px; }
.mid2 { width: 248px; }
.mem { width: 91px; display: flex; align-items: center; padding-left: 3px; background: linear-gradient(#b9d8fb, #63a9ef); letter-spacing: 0; }

.taskbar { height: 40px; flex: none; display: flex; align-items: center; background: linear-gradient(90deg, #1e1f29, #202330 60%, #22253b); color: #fff; font: 12px/18px "Open Sans", sans-serif; letter-spacing: 0; }
.start { width: 48px; padding-left: 16px; }
.search { width: 344px; height: 40px; background: #333; border: 1px solid #555; display: flex; align-items: center; padding-left: 11px; color: #d0d0d0; font-size: 14px; letter-spacing: -.1px; }
.search span { margin-left: 10px; }
.apps { display: flex; height: 40px; }
.app { width: 49.100px; display: flex; align-items: center; justify-content: center; position: relative; }
.running::after { content: ""; position: absolute; left: 5px; right: 5px; bottom: 0; height: 2px; background: #76b9ed; }
.active { background: #4b4d58; width: 48px; border-bottom: 2px solid #76b9ed; }
.tray { margin-left: 129px; }
.eng { margin-left: 9px; letter-spacing: -.4px; }
.clock { width: 60px; margin-left: 12px; display: flex; flex-direction: column; align-items: center; letter-spacing: -.35px; }
.note { margin-left: 17px; }
.peek { margin-left: auto; margin-right: 4px; width: 1px; height: 40px; background: #888; }

.dialog { position: absolute; left: 256px; top: 12px; width: 714px; height: 702px; border: 1px solid #666; background: #e4effc; box-shadow: 0 4px 17px rgba(0, 0, 0, .45); display: flex; flex-direction: column; }
.dtitle { height: 30px; flex: none; background: #fff; display: flex; align-items: center; padding: 0 9px 0 8px; font: 12px "Open Sans", sans-serif; letter-spacing: 0; }
.dtitle span { margin-left: 5px; }
.dtitle .x { margin-left: auto; }
.dhead { height: 91px; flex: none; display: flex; flex-direction: column; background: linear-gradient(#e4effc 50%, #d9d7e2); }
.dtop { flex: 1; display: flex; padding: 7px 2px 0 4px; }
.tools { display: flex; margin-left: auto; margin-top: -5px; }
.tbtn { width: 30px; height: 26px; border: 1px solid #1e7cd6; border-radius: 5px; background: linear-gradient(#bfdbfc, #70b0f1); display: flex; align-items: center; justify-content: center; }
.tbtn.dark { background: #93b8e3; border: 2px solid #27426a; }
.dhead .tabs { height: 29px; background: none; padding-left: 6px; gap: 2.500px; margin-bottom: 0; align-items: flex-end; }
.dhead .tabs::after { left: 0; }
.dhead .tab { padding: 8px 3px 0; letter-spacing: .3px; }
.dhead .tab.on { width: 38px; padding: 6px 0 0 3px; letter-spacing: .25px; }
.dhead .tab:nth-child(2) { width: 54px; } .dhead .tab:nth-child(3) { width: 74px; } .dhead .tab:nth-child(4) { width: 43px; } .dhead .tab:nth-child(5) { width: 74px; }
.dhead .tab:nth-child(5) { letter-spacing: .1px; }
.dbody { display: flex; height: 500px; flex: none; margin-top: 5px; }
.dleft { width: 232px; padding-left: 5px; }
.sort { height: 26px; display: flex; align-items: center; padding-left: 7px; }
.sort label { display: flex; align-items: center; width: 54px; letter-spacing: .3px; }
.sort label:first-child { width: 60px; }
.sort label:nth-child(3) { width: 49px; }
.radio { width: 12px; height: 12px; border-radius: 6px; border: 1px solid #333; background: #fff; box-shadow: inset 0 0 0 1px #fff, inset 0 0 0 2px #a9bfd8; margin-right: 4px; }
.radio.sel { background: #1f66b4; }
.sb { width: 26px; height: 26px; border: 1px solid #1874d8; background: linear-gradient(#65a5ef, #b2d6fd); display: flex; align-items: center; justify-content: center; }
.pressed { background: #5185be; border-color: #103a75; }
.list { height: 249px; border: 1px solid #1565b5; background: #fff; padding: 2px 2px 0 1px; }
.frow { height: 16px; display: flex; align-items: center; padding-left: 1px; letter-spacing: .26px; }
.frow.on { background: #ffe48c; }
.frow span { margin-left: 4px; }
.vis { margin: 7px 0 7px 11px; letter-spacing: .1px; }
.v1 { margin: 0 0 2px 2px; }
.summary { display: flex; align-items: center; margin-top: 133px; padding-left: 6px; letter-spacing: .35px; }
.summary em { margin-left: 4px; }
.select { margin-left: auto; margin-right: 5px; width: 146px; height: 22px; border: 1px solid #4b9be8; border-radius: 2px; background: linear-gradient(#cfe1f7, #83b9ee); padding: 3px 7px 0 2px; display: flex; justify-content: space-between; }
.select i { border: 5px solid transparent; border-top-color: #555; border-bottom: 0; height: 5px; margin-top: 5px; }
.gallery { width: 476px; border: 1px solid #1565b5; display: flex; overflow: hidden; }
.cards { width: 457px; height: 498px; overflow: hidden; display: grid; grid-template-columns: 156px 156px 146px; grid-template-rows: 132px 148px 132px 132px; row-gap: 4px; justify-items: center; align-items: start; padding-top: 3px; }
.card { width: 122px; height: 132px; padding-top: 1px; border: 7px solid #cdc8c7; border-bottom-width: 7px; background: linear-gradient(#fff 10%, #ccc7c6 92%); display: flex; flex-direction: column; align-items: center; padding-top: 0; position: relative; }
.card.w136 { width: 136px; } .card.w132 { width: 132px; }
.card.tall { height: 148px; }
.card.sel { border: 6px solid #6b6a68; background: #cdc8c7; padding-top: 1px; }
.cap { margin-top: 5px; letter-spacing: .2px; height: 16px; position: relative; }
.tall .cap { white-space: normal; width: 76px; }
.gal-vs { margin: 1px 0 1px auto; width: 15px; }
.gal-vs { margin-right: 1px; }
.gal-vs .thumb { height: 415px; }
.drow { display: flex; gap: 5px; margin: 10px 5px 0; align-items: center; height: 26px; }
.drow > span { margin-left: 2px; }
.drow.last { margin-top: 8px; }
.bt { width: 56px; height: 24px; border: 1px solid #1178d2; border-radius: 5px; background: linear-gradient(#bedbfc, #9dc9f8 50%, #5aa4ec); display: flex; align-items: center; justify-content: center; padding-top: 1px; }
.w81 { width: 81px; letter-spacing: .4px; }
.ok { padding-left: 5px; }
.run svg { margin-right: 5px; }
.bt:nth-child(3) { padding-left: 5px; }
.push { margin-left: auto; padding-left: 6px; }
.ind { padding-left: 6px; }
</style>
